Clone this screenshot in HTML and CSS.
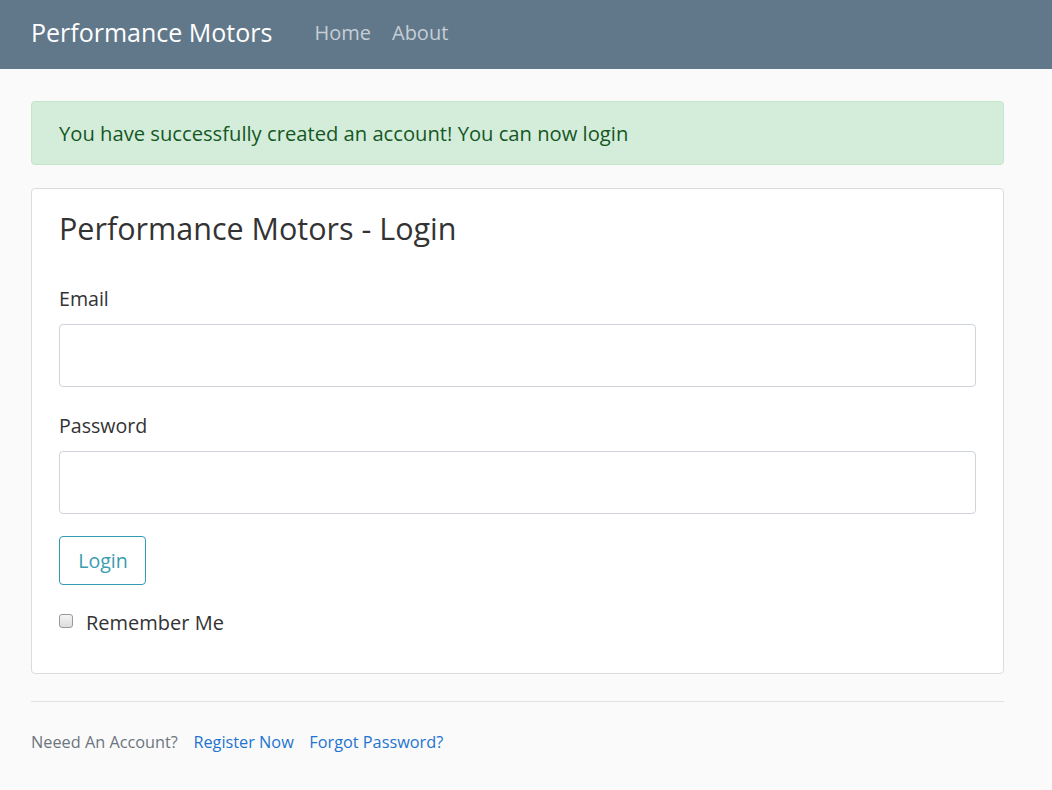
FILE: index.html
```html
<!DOCTYPE html>
<html>
<head>
<meta charset="utf-8">
<link rel="stylesheet" href="styles.css">
</head>
<body>
<nav class="navbar">
  <a class="brand" href="#">Performance Motors</a>
  <div class="nav-links">
    <a class="nav-link" href="#">Home</a>
    <a class="nav-link" href="#">About</a>
  </div>
</nav>
<main class="container">
  <div class="alert">You have successfully created an account! You can now login</div>
  <section class="card">
    <h1 class="card-title">Performance Motors - Login</h1>
    <div class="group">
      <label class="label">Email</label>
      <input class="input" type="text">
    </div>
    <div class="group">
      <label class="label">Password</label>
      <input class="input" type="password">
    </div>
    <button class="btn">Login</button>
    <div class="check-row">
      <span class="checkbox"></span>
      <span class="check-label">Remember Me</span>
    </div>
  </section>
  <hr class="divider">
  <footer class="footer">
    <span class="muted">Neeed An Account?</span>
    <a class="link" href="#">Register Now</a>
    <a class="link" href="#">Forgot Password?</a>
  </footer>
</main>
</body>
</html>
```
FILE: styles.css
```css
* { box-sizing: border-box; }
body {
  margin: 0;
  background: #fafafa;
  font-family: "Open Sans", "Noto Sans", sans-serif;
  color: #333;
}
.navbar {
  height: 69px;
  background: #61788a;
  display: flex;
  align-items: center;
  padding: 0 31px 5px;
}
.brand {
  color: #fff;
  font-size: 25px;
  text-decoration: none;
}
.nav-links {
  display: flex;
  gap: 21px;
  margin-left: 42px;
}
.nav-link {
  color: #c5ced6;
  font-size: 20px;
  text-decoration: none;
}
.container {
  width: 973px;
  margin-left: 31px;
  padding-top: 32px;
}
.alert {
  height: 64px;
  background: #d4edda;
  border: 1px solid #c3e6cb;
  border-radius: 4px;
  color: #155724;
  font-size: 20.2px;
  display: flex;
  align-items: center;
  padding: 0 27px 1px;
}
.card {
  margin-top: 23px;
  background: #fff;
  border: 1px solid #dcdcdc;
  border-radius: 4px;
  padding: 20px 27px 36px;
}
.card-title {
  margin: 0 0 37px;
  font-weight: 400;
  font-size: 30.5px;
  line-height: 38px;
  color: #333;
}
.group { margin-bottom: 24px; }
.group + .group { margin-bottom: 22px; }
.label {
  display: block;
  font-size: 19.6px;
  line-height: 30px;
  margin-bottom: 10px;
  color: #333;
}
.input {
  display: block;
  width: 100%;
  height: 63px;
  border: 1px solid #ced4da;
  border-radius: 4px;
  background: #fff;
  font-size: 19px;
}
.btn {
  display: block;
  height: 49px;
  width: 87px;
  padding: 0 0 0 1px;
  background: transparent;
  border: 1px solid #2f9bb0;
  border-radius: 4px;
  color: #3b9db0;
  font-family: inherit;
  font-size: 19.6px;
}
.check-row {
  margin-top: 22px;
  display: flex;
  align-items: center;
  height: 30px;
}
.checkbox {
  width: 14px;
  height: 14px;
  border: 1px solid #9a9a9a;
  border-radius: 3px;
  background: linear-gradient(#f4f4f4, #dcdcdc);
  margin-right: 13px;
  margin-top: -2px;
}
.check-label {
  font-size: 20px;
  color: #333;
}
.divider {
  margin: 27px 0 0;
  border: 0;
  border-top: 1px solid #e2e2e2;
}
.footer {
  margin-top: 27px;
  display: flex;
  gap: 15.5px;
  font-size: 16.3px;
  line-height: 27px;
}
.muted { color: #6c757d; }
.link { color: #1f74d0; text-decoration: none; }
```
